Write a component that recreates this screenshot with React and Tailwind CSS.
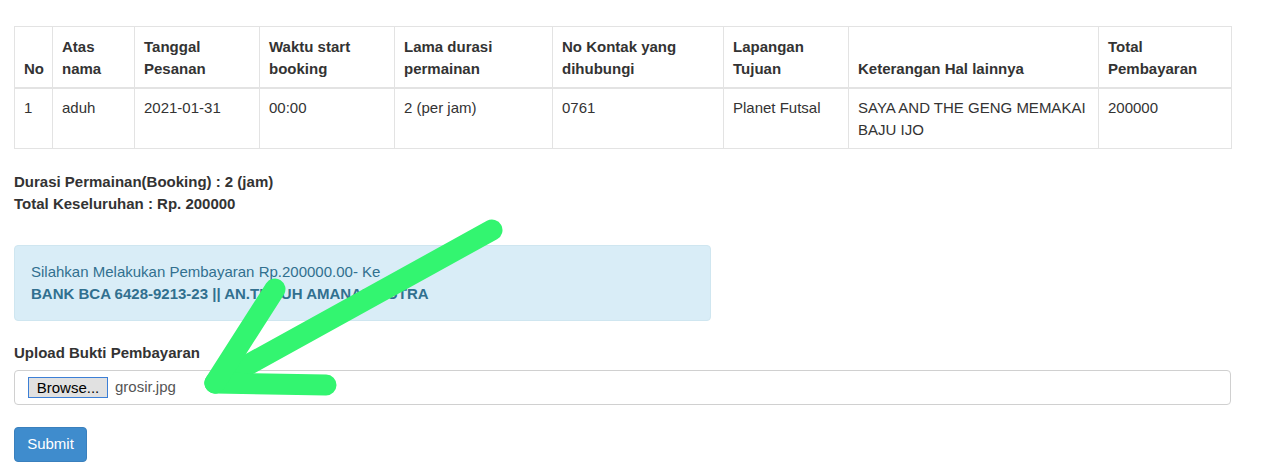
export default function App() {
  const cols = [
    { w: 38, h: "No" },
    { w: 82, h: "Atas nama" },
    { w: 125, h: "Tanggal Pesanan" },
    { w: 135, h: "Waktu start booking" },
    { w: 158, h: "Lama durasi permainan" },
    { w: 171, h: "No Kontak yang dihubungi" },
    { w: 125, h: "Lapangan Tujuan" },
    { w: 250, h: "Keterangan Hal lainnya" },
    { w: 133, h: "Total Pembayaran" },
  ];
  const row = ["1", "aduh", "2021-01-31", "00:00", "2 (per jam)", "0761", "Planet Futsal", "SAYA AND THE GENG MEMAKAI BAJU IJO", "200000"];
  return (
    <div className="relative w-[1280px] h-[472px] bg-white overflow-hidden text-[#333] text-[15px] leading-[21.5px]" style={{ fontFamily: '"Liberation Sans", Arial, sans-serif' }}>
      <div className="pl-[14px] pt-[26px] w-[1231px]">
        <table className="w-[1217px] border-collapse table-fixed">
          <colgroup>
            <col className="w-[38px]" />
            <col className="w-[82px]" />
            <col className="w-[125px]" />
            <col className="w-[135px]" />
            <col className="w-[158px]" />
            <col className="w-[171px]" />
            <col className="w-[125px]" />
            <col className="w-[250px]" />
            <col className="w-[133px]" />
          </colgroup>
          <thead>
            <tr>
              {cols.map((c) => (
                <th key={c.h} className="border border-[#e3e3e3] border-b-2 px-[9px] pt-[9px] pb-[8px] text-left align-bottom font-bold">
                  {c.h}
                </th>
              ))}
            </tr>
          </thead>
          <tbody>
            <tr>
              {row.map((v, i) => (
                <td key={i} className="border border-[#e3e3e3] px-[9px] py-[8px] align-top h-[60px]">
                  {v}
                </td>
              ))}
            </tr>
          </tbody>
        </table>

        <div className="mt-[22px] font-bold">
          <div>Durasi Permainan(Booking) : 2 (jam)</div>
          <div>Total Keseluruhan : Rp. 200000</div>
        </div>

        <div className="mt-[31px] w-[697px] h-[76px] bg-[#d9edf7] border border-[#cfe6f0] rounded-[4px] px-[16px] pt-[15px] text-[#31708f]">
          <div>Silahkan Melakukan Pembayaran Rp.200000.00- Ke</div>
          <div className="font-bold">BANK BCA 6428-9213-23 || AN.TEGUH AMANAH PUTRA</div>
        </div>

        <div className="mt-[21px] font-bold">Upload Bukti Pembayaran</div>
        <div className="mt-[6px] w-[1217px] h-[35px] border border-[#d0d0d0] rounded-[4px] flex items-center pl-[13px]">
          <div className="w-[80px] h-[21px] border border-[#3c7fd6] bg-[#e1e1e1] text-black text-[15px] leading-[19px] flex items-center justify-center">
            Browse...
          </div>
          <span className="ml-[7px] text-[#555]">grosir.jpg</span>
        </div>

        <div className="mt-[22px] w-[73px] h-[35px] rounded-[4px] bg-[#3f8ccd] border border-[#3a80bd] text-white flex items-center justify-center">
          Submit
        </div>
      </div>

      <svg className="absolute left-0 top-0" width="1280" height="472" viewBox="0 0 1280 472">
        <g stroke="#33f570" strokeWidth="21" strokeLinecap="round" strokeLinejoin="round" fill="none">
          <line x1="492" y1="230" x2="215" y2="383" />
          <line x1="215" y1="383" x2="326" y2="385" />
          <line x1="215" y1="383" x2="275" y2="289" />
        </g>
      </svg>
    </div>
  );
}
